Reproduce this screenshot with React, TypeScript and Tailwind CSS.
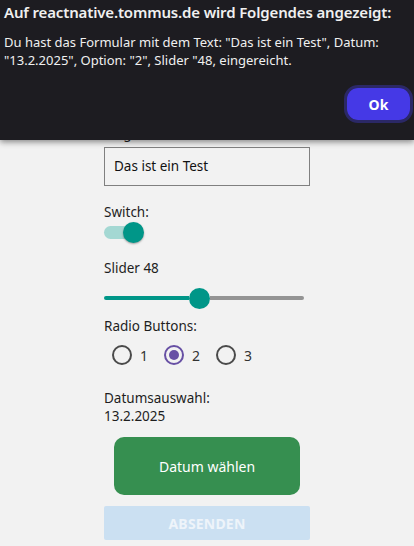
import React from "react";

const font = { fontFamily: '"Segoe UI", "Noto Sans", "Open Sans", sans-serif' };

function Radio({ checked, label }: { checked?: boolean; label: string }) {
  return (
    <div className="flex items-center">
      <div
        className={`w-[20px] h-[20px] rounded-full border-2 flex items-center justify-center ${
          checked ? "border-[#6750a4]" : "border-[#4a4a4a]"
        }`}
      >
        {checked && <div className="w-[10px] h-[10px] rounded-full bg-[#6750a4]" />}
      </div>
      <span className="ml-[8px] text-[14px] leading-[19px] text-[#333]">{label}</span>
    </div>
  );
}

export default function App() {
  return (
    <div className="relative w-[414px] h-[546px] bg-[#f2f2f2] overflow-hidden" style={font}>
      <div className="mx-auto w-[206px] pt-[124px] flex flex-col text-[13.5px] text-[#1e1e1e]">
        <div className="leading-[19px]">Eingabefeld:</div>
        <div className="mt-[4px] h-[39px] border border-[#808080] flex items-center px-[9px] leading-[19px] text-[#111]">
          Das ist ein Test
        </div>
        <div className="mt-[17px] leading-[19px]">Switch:</div>
        <div className="h-[21px] flex items-center">
          <div className="relative w-[36px] h-[13px] rounded-full bg-[#a4d8d3]">
            <div className="absolute left-[19px] top-[-4px] w-[21px] h-[21px] rounded-full bg-[#009688] shadow-[0_1px_2px_rgba(0,0,0,0.35)]" />
          </div>
        </div>
        <div className="mt-[16px] leading-[19px]">Slider 48</div>
        <div className="mt-[10px] h-[20px] flex items-center w-[200px]">
          <div className="h-[4px] w-[85px] bg-[#009688] rounded-l-full" />
          <div className="w-[21px] h-[21px] rounded-full bg-[#009688] shrink-0" />
          <div className="h-[4px] flex-1 bg-[#949494] rounded-r-full" />
        </div>
        <div className="mt-[9px] leading-[19px]">Radio Buttons:</div>
        <div className="mt-[9px] h-[20px] flex items-center gap-[16px] pl-[8px]">
          <Radio label="1" />
          <Radio checked label="2" />
          <Radio label="3" />
        </div>
        <div className="mt-[24px] leading-[18px]">Datumsauswahl:</div>
        <div className="leading-[18px]">13.2.2025</div>
        <div className="mt-[12px] mx-auto w-[186px] h-[58px] rounded-[10px] bg-[#368f50] flex items-center justify-center text-white text-[14px]">
          Datum wählen
        </div>
        <div className="mt-[11px] h-[34px] rounded-[2px] bg-[#cbe0f2] flex items-center justify-center text-[#eef4fa] text-[14px] font-bold tracking-[0.2px]">
          ABSENDEN
        </div>
      </div>

      <div className="absolute top-0 left-0 w-[414px] h-[140px] bg-[#1d1c21] shadow-[0_2px_6px_rgba(0,0,0,0.45)] text-[#f0f0f0]">
        <div className="absolute left-[4px] top-[1px] text-[15px] font-semibold tracking-[-0.15px] leading-[22px] whitespace-nowrap">
          Auf reactnative.tommus.de wird Folgendes angezeigt:
        </div>
        <div className="absolute left-[4px] top-[33px] w-[400px] text-[13px] leading-[18px]">
          Du hast das Formular mit dem Text: "Das ist ein Test", Datum: "13.2.2025", Option: "2", Slider "48, eingereicht.
        </div>
        <div className="absolute left-[344px] top-[85px] w-[69px] h-[38px] rounded-[14px] border-[3px] border-[#2b2866] flex items-center justify-center">
          <div className="w-full h-full rounded-[11px] bg-[#4539e6] flex items-center justify-center text-[14px] font-bold text-white">
            Ok
          </div>
        </div>
      </div>
    </div>
  );
}
